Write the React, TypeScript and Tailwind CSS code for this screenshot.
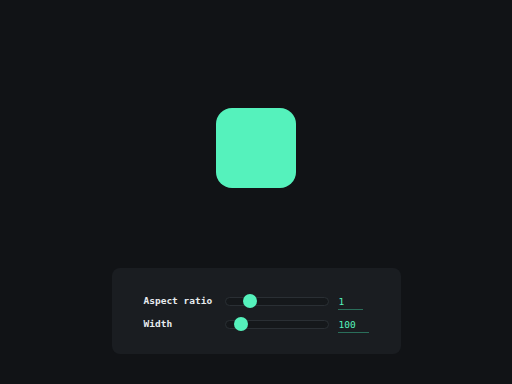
import React from 'react';

const rows = [
    { label: 'Aspect ratio', value: '1', thumb: 24, line: 'w-[25px]' },
    { label: 'Width', value: '100', thumb: 15, line: 'w-[31px]' },
];

export default function App() {
    return (
        <div className="h-[384px] w-[512px] bg-[#111316] flex flex-col items-center font-['DejaVu_Sans_Mono',monospace]">
            <div className="mt-[108px] w-[80px] h-[80px] rounded-[16px] bg-[#55f2bc]" />

            <div className="mt-[80px] w-[289px] h-[86px] rounded-[8px] bg-[#1a1d21] pl-[32px] pt-[25px] flex flex-col gap-[7px]">
                {rows.map((r) => (
                    <div key={r.label} className="flex items-center h-[16px]">
                        <div className="w-[81px] text-[9.5px] font-bold text-[#e8ecef]">{r.label}</div>
                        <div className="relative w-[104px] h-[9px] rounded-full border border-[#2a2f34] bg-[#15181b]">
                            <div
                                className="absolute top-1/2 -translate-y-1/2 -translate-x-1/2 w-[14px] h-[14px] rounded-full bg-[#55f2bc]"
                                style={{ left: r.thumb }}
                            />
                        </div>
                        <div className={`ml-[9px] ${r.line} pl-[1px] pt-[3px] pb-[1px] border-b border-[#2a6e5a] text-[9.5px] text-[#55f2bc] leading-[12px]`}>
                            {r.value}
                        </div>
                    </div>
                ))}
            </div>
        </div>
    );
}
